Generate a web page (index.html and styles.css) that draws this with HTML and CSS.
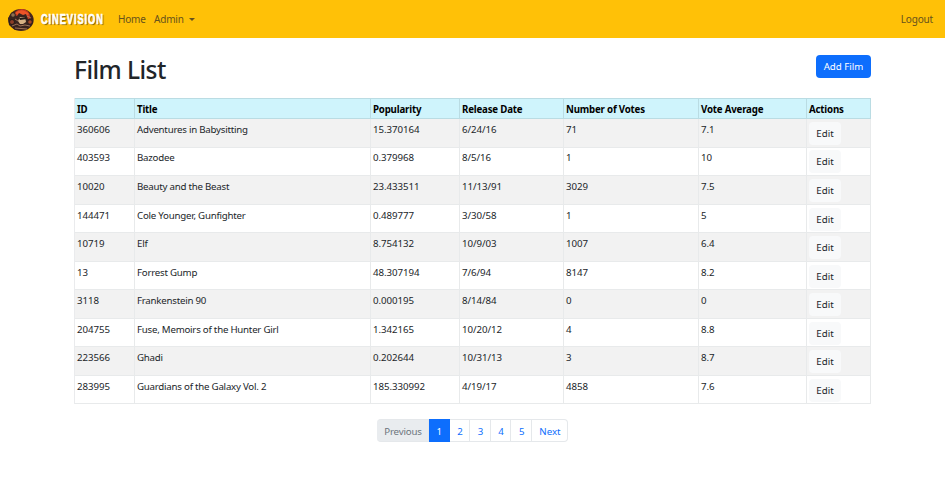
FILE: index.html
```html
<!DOCTYPE html>
<html lang="en">
<head>
<meta charset="utf-8">
<title>Film List</title>
<link rel="stylesheet" href="styles.css">
</head>
<body>
<nav class="navbar">
  <a class="brand">
    <svg class="logo" viewBox="0 0 28 24">
      <ellipse cx="14" cy="12" rx="12.7" ry="11" fill="#49281d"/>
      <circle cx="15" cy="9" r="8" fill="#c63b20"/>
      <path d="M8 5Q15-1 22 6L19 8 11 7Z" fill="#ed5427"/>
      <path d="M1 10 5 6l5 2 2-3 4 2 3-1 2 5 5-1-1 7-5 4-12 1-6-5Z" fill="#38231e"/>
      <path d="M13 9h5l1 5-3 2h-3l-2-3Z" fill="#d6b184"/>
      <path d="m12 10 7-1 1 2-7 1Z" fill="#241c19"/>
      <circle cx="6" cy="7" r="2.3" fill="#8e6e50" stroke="#30231e"/>
      <circle cx="5" cy="14" r="2.5" fill="#8c3e27" stroke="#241b19"/>
      <circle cx="23" cy="14" r="2.3" fill="#a34427" stroke="#2b1d1a"/>
      <path d="m5 18 5-2 3 2 5-1 5 1M8 20l12 1M20 8l4 2M8 11l3 2" fill="none" stroke="#b58463" stroke-width=".8"/>
    </svg>
    <span class="wordmark">CINEVISION</span>
  </a>
  <a class="nav-link home">Home</a>
  <a class="nav-link">Admin<span class="caret"></span></a>
  <a class="nav-link logout">Logout</a>
</nav>
<main class="container">
  <header class="heading">
    <h1>Film List</h1>
    <button class="btn primary">Add Film</button>
  </header>
  <table>
    <colgroup><col class="c-id"><col class="c-title"><col class="c-pop"><col class="c-date"><col class="c-votes"><col class="c-avg"><col class="c-act"></colgroup>
    <thead><tr><th>ID</th><th>Title</th><th>Popularity</th><th>Release Date</th><th>Number of Votes</th><th>Vote Average</th><th>Actions</th></tr></thead>
    <tbody>
      <tr><td>360606</td><td>Adventures in Babysitting</td><td>15.370164</td><td>6/24/16</td><td>71</td><td>7.1</td><td><button class="btn light">Edit</button></td></tr>
      <tr><td>403593</td><td>Bazodee</td><td>0.379968</td><td>8/5/16</td><td>1</td><td>10</td><td><button class="btn light">Edit</button></td></tr>
      <tr><td>10020</td><td>Beauty and the Beast</td><td>23.433511</td><td>11/13/91</td><td>3029</td><td>7.5</td><td><button class="btn light">Edit</button></td></tr>
      <tr><td>144471</td><td>Cole Younger, Gunfighter</td><td>0.489777</td><td>3/30/58</td><td>1</td><td>5</td><td><button class="btn light">Edit</button></td></tr>
      <tr><td>10719</td><td>Elf</td><td>8.754132</td><td>10/9/03</td><td>1007</td><td>6.4</td><td><button class="btn light">Edit</button></td></tr>
      <tr><td>13</td><td>Forrest Gump</td><td>48.307194</td><td>7/6/94</td><td>8147</td><td>8.2</td><td><button class="btn light">Edit</button></td></tr>
      <tr><td>3118</td><td>Frankenstein 90</td><td>0.000195</td><td>8/14/84</td><td>0</td><td>0</td><td><button class="btn light">Edit</button></td></tr>
      <tr><td>204755</td><td>Fuse, Memoirs of the Hunter Girl</td><td>1.342165</td><td>10/20/12</td><td>4</td><td>8.8</td><td><button class="btn light">Edit</button></td></tr>
      <tr><td>223566</td><td>Ghadi</td><td>0.202644</td><td>10/31/13</td><td>3</td><td>8.7</td><td><button class="btn light">Edit</button></td></tr>
      <tr><td>283995</td><td>Guardians of the Galaxy Vol. 2</td><td>185.330992</td><td>4/19/17</td><td>4858</td><td>7.6</td><td><button class="btn light">Edit</button></td></tr>
    </tbody>
  </table>
  <div class="pagination">
    <a class="disabled">Previous</a><a class="active">1</a><a>2</a><a>3</a><a>4</a><a>5</a><a class="next">Next</a>
  </div>
</main>
</body>
</html>
```
FILE: styles.css
```css
* { box-sizing: border-box; }
body {
  margin: 0;
  background: #fff;
  color: #212529;
  font: 9.7px/15px "Noto Sans", "Open Sans", sans-serif;
  overflow: hidden;
}
.navbar {
  display: flex;
  align-items: center;
  height: 38px;
  padding: 1px 12px 0 7px;
  background: #ffc107;
}
.brand { display: flex; align-items: center; width: 111px; }
.logo { flex: none; width: 28px; height: 24px; margin-top: 1px; }
.wordmark {
  margin-left: 6px;
  margin-top: -1px;
  width: 62px;
  font: 700 15.5px/20px "Liberation Sans", sans-serif;
  color: #fff;
  -webkit-text-stroke: .7px #fff;
  letter-spacing: 1.5px;
  text-shadow: 2px 1px 1px rgba(0, 0, 0, .5);
  transform: scaleX(.6);
  transform-origin: left;
}
.nav-link { color: #66521d; font-size: 10px; letter-spacing: -.18px; }
.home { width: 36px; }
.logout { margin-left: auto; }
.caret {
  display: inline-block;
  margin-left: 5px;
  vertical-align: 2px;
  border: 3px solid transparent;
  border-top-color: currentColor;
  border-bottom: 0;
}
.container { width: 797px; margin-left: 74px; }
.heading {
  display: flex;
  justify-content: space-between;
  align-items: flex-start;
  height: 60px;
  padding-top: 17px;
}
h1 {
  margin: 0;
  font-size: 24.5px;
  font-weight: 500;
  line-height: 30px;
  letter-spacing: -.55px;
}
.btn {
  display: block;
  border: 0;
  border-radius: 4px;
  padding: 0;
  height: 23px;
  font: inherit;
}
.primary { width: 55px; background: #0d6efd; color: #fff; }
.light { width: 32px; background: #f8f9fa; color: #212529; }
table {
  width: 797px;
  table-layout: fixed;
  border-collapse: separate;
  border-spacing: 0;
  border-left: 1px solid #eaebed;
}
.c-id { width: 60px; }
.c-title { width: 236px; }
.c-pop { width: 89px; }
.c-date { width: 104px; }
.c-votes { width: 135px; }
.c-avg { width: 108px; }
.c-act { width: 64px; }
th, td {
  padding: 2px;
  text-align: left;
  vertical-align: top;
  white-space: nowrap;
  border-right: 1px solid #e8eaeb;
  border-bottom: 1px solid #e8eaeb;
}
th {
  height: 21px;
  padding: 3px 2px 1px;
  letter-spacing: -.19px;
  color: #000;
  background: #cff4fc;
  border-color: #badce3;
  border-top: 1px solid #badce3;
}
td { height: 28.55px; padding: 2.9px 2px 1.5px; letter-spacing: -.06px; }
td:nth-child(2) { letter-spacing: -.23px; }
tbody tr:nth-child(odd) td { background: #f2f2f2; }
.pagination { display: flex; justify-content: center; margin-top: 14.5px; }
.pagination a {
  width: 20.6px;
  height: 23px;
  text-align: center;
  color: #0d6efd;
  border: 1px solid #e5e8eb;
  border-left: 0;
  line-height: 23px;
  padding-left: 1px;
}
.pagination .disabled {
  width: 52px;
  color: #6c757d;
  background: #e9ecef;
  border-radius: 4px 0 0 4px;
  letter-spacing: -.15px;
}
.pagination .active { color: #fff; background: #0d6efd; border-color: #0d6efd; }
.pagination .next { width: 36px; border-radius: 0 4px 4px 0; }
```
